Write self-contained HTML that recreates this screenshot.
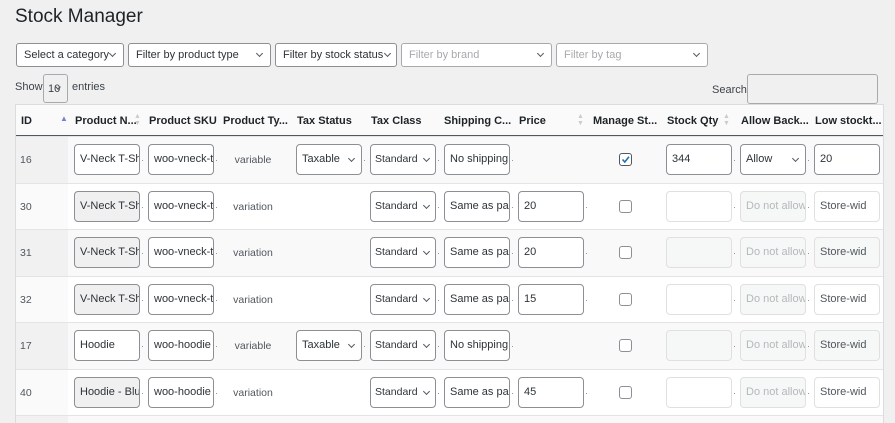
<!DOCTYPE html>
<html><head><meta charset="utf-8"><style>
*{box-sizing:border-box;margin:0;padding:0}
html,body{width:895px;height:423px;overflow:hidden}
body{background:#f0f0f1;font-family:"Liberation Sans",sans-serif;color:#3c434a;font-size:11px;position:relative}
.a{position:absolute}
h1{position:absolute;left:15px;top:6px;font-size:19px;font-weight:400;color:#1d2327}
.f{position:absolute;top:43px;height:24px;background:#fff;border:1px solid #8c8f94;border-radius:3px;padding:0 7px;line-height:22px;font-size:11px;color:#2c3338;white-space:nowrap}
.f.p{color:#a7aaad;border-color:#a7aaad}
.chev{position:absolute;width:5px;height:5px;border-right:1.2px solid #50575e;border-bottom:1.2px solid #50575e;transform:rotate(45deg)}
.tbl{position:absolute;left:15px;top:104px;width:869px;height:319px;background:#fff;border-left:1px solid #dcdcde;border-right:1px solid #dcdcde;border-top:1px solid #dcdcde;overflow:hidden}
.hd{position:absolute;left:0;top:0;width:869px;height:32px;background:#fafafa;border-bottom:2px solid #50575e}
.hd span{position:absolute;top:10px;font-weight:bold;font-size:11px;color:#1d2327}
.r{position:absolute;left:-1px;width:869px;height:47px;border-top:1px solid #e4e4e4}
.r.o{background:#f9f9f9}
.id{position:absolute;left:0;top:0;width:53px;height:46px;padding:17px 5px;color:#50575e;font-size:10.5px;background:#fafafa}
.o .id{background:#f1f1f1}
.i{position:absolute;top:7px;width:66px;height:31px;border:1px solid #8c8f94;border-radius:4px;background:#fff;padding:0 5px;line-height:29px;font-size:11px;color:#2c3338;white-space:nowrap;overflow:hidden}
.i.g{background:#f0f0f1}
.i.d{border-color:#e0e0e0;color:#b5b8bb;background:#fff}
.o .i.d{background:#f6f7f7}
.i.d2{border-color:#e0e0e0;color:#b5b8bb;background:#f6f7f7}
.dot{position:absolute;top:23px;width:1px;height:1px;background:#999}
.t{position:absolute;left:201px;width:74px;top:17px;text-align:center;font-size:10.5px;color:#50575e}
.cb{position:absolute;left:604px;top:16px;width:13px;height:13px;border:1px solid #8c8f94;border-radius:3px;background:#fff}
.sel{padding-right:16px}
.sel .chev{right:7px;top:11px}
.sc{font-size:10.5px;padding-left:4px}
</style></head><body>
<h1>Stock Manager</h1>
<div class="f" style="left:16px;width:108px">Select a category<i class="chev" style="right:8px;top:7px"></i></div>
<div class="f" style="left:128px;width:143px">Filter by product type<i class="chev" style="right:8px;top:7px"></i></div>
<div class="f" style="left:275px;width:122px;padding-right:16px;overflow:hidden">Filter by stock status<i class="chev" style="right:6px;top:7px"></i></div>
<div class="f p" style="left:401px;width:151px">Filter by brand<i class="chev" style="right:8px;top:7px"></i></div>
<div class="f p" style="left:556px;width:152px">Filter by tag<i class="chev" style="right:8px;top:7px"></i></div>
<div class="a" style="left:15px;top:81px;color:#3c434a">Show</div>
<div class="a" style="left:43px;top:74px;width:25px;height:29px;border:1px solid #a7aaad;border-radius:3px;background:#f0f0f1;padding:8px 4px;font-size:11px">10<i class="chev" style="left:12px;top:10px;width:4px;height:4px"></i></div>
<div class="a" style="left:72px;top:81px">entries</div>
<div class="a" style="left:712px;top:84px">Search:</div>
<div class="a" style="left:747px;top:74px;width:131px;height:30px;border:1px solid #a7aaad;border-radius:3px;background:#f0f0f1"></div>

<div class="tbl">
<div class="hd">
<span style="left:5px">ID</span><span style="left:44px;top:9px;color:#7a7fd6;font-size:8px">▲</span>
<span style="left:59px">Product N...</span><span style="left:118px;color:#ccc;font-size:7px;top:8px">▲<br>▼</span>
<span style="left:133px">Product SKU</span>
<span style="left:207px">Product Ty...</span>
<span style="left:281px">Tax Status</span>
<span style="left:355px">Tax Class</span>
<span style="left:428px">Shipping C...</span>
<span style="left:503px">Price</span><span style="left:561px;color:#ccc;font-size:7px;top:8px">▲<br>▼</span>
<span style="left:577px">Manage St...</span>
<span style="left:651px">Stock Qty</span><span style="left:707px;color:#ccc;font-size:7px;top:8px">▲<br>▼</span>
<span style="left:725px">Allow Back...</span>
<span style="left:799px">Low stockt...</span>
</div>

<div class="r o" style="top:31px"><div class="id">16</div>
<div class="i" style="left:59px">V-Neck T-Sh</div><i class="dot" style="left:127px"></i>
<div class="i" style="left:133px">woo-vneck-t</div><i class="dot" style="left:201px"></i>
<div class="t">variable</div>
<div class="i sel" style="left:281px">Taxable<i class="chev"></i></div><i class="dot" style="left:349px"></i>
<div class="i sel sc" style="left:355px">Standard<i class="chev" style="right:6px"></i></div><i class="dot" style="left:423px"></i>
<div class="i" style="left:429px">No shipping</div><i class="dot" style="left:497px"></i>
<div class="cb" style="border-color:#50575e"><svg width="11" height="11" style="position:absolute;left:0;top:0"><path d="M2.5 5.5 L4.8 8 L9 2.8" fill="none" stroke="#2271b1" stroke-width="1.6"/></svg></div>
<div class="i" style="left:651px">344</div><i class="dot" style="left:719px"></i>
<div class="i sel" style="left:725px">Allow<i class="chev"></i></div><i class="dot" style="left:793px"></i>
<div class="i" style="left:799px">20</div>
</div>

<div class="r" style="top:78px"><div class="id">30</div>
<div class="i g" style="left:59px">V-Neck T-Sh</div><i class="dot" style="left:127px"></i>
<div class="i" style="left:133px">woo-vneck-t</div><i class="dot" style="left:201px"></i>
<div class="t">variation</div>
<div class="i sel sc" style="left:355px">Standard<i class="chev" style="right:6px"></i></div><i class="dot" style="left:423px"></i>
<div class="i" style="left:429px">Same as par</div><i class="dot" style="left:497px"></i>
<div class="i" style="left:503px">20</div><i class="dot" style="left:571px"></i>
<div class="cb"></div>
<div class="i d" style="left:651px"></div><i class="dot" style="left:719px"></i>
<div class="i d2" style="left:725px">Do not allow</div><i class="dot" style="left:793px"></i>
<div class="i d" style="left:799px;color:#50575e">Store-wid</div>
</div>

<div class="r o" style="top:124px"><div class="id">31</div>
<div class="i g" style="left:59px">V-Neck T-Sh</div><i class="dot" style="left:127px"></i>
<div class="i" style="left:133px">woo-vneck-t</div><i class="dot" style="left:201px"></i>
<div class="t">variation</div>
<div class="i sel sc" style="left:355px">Standard<i class="chev" style="right:6px"></i></div><i class="dot" style="left:423px"></i>
<div class="i" style="left:429px">Same as par</div><i class="dot" style="left:497px"></i>
<div class="i" style="left:503px">20</div><i class="dot" style="left:571px"></i>
<div class="cb"></div>
<div class="i d" style="left:651px"></div><i class="dot" style="left:719px"></i>
<div class="i d2" style="left:725px">Do not allow</div><i class="dot" style="left:793px"></i>
<div class="i d" style="left:799px;color:#50575e">Store-wid</div>
</div>

<div class="r" style="top:171px"><div class="id">32</div>
<div class="i g" style="left:59px">V-Neck T-Sh</div><i class="dot" style="left:127px"></i>
<div class="i" style="left:133px">woo-vneck-t</div><i class="dot" style="left:201px"></i>
<div class="t">variation</div>
<div class="i sel sc" style="left:355px">Standard<i class="chev" style="right:6px"></i></div><i class="dot" style="left:423px"></i>
<div class="i" style="left:429px">Same as par</div><i class="dot" style="left:497px"></i>
<div class="i" style="left:503px">15</div><i class="dot" style="left:571px"></i>
<div class="cb"></div>
<div class="i d" style="left:651px"></div><i class="dot" style="left:719px"></i>
<div class="i d2" style="left:725px">Do not allow</div><i class="dot" style="left:793px"></i>
<div class="i d" style="left:799px;color:#50575e">Store-wid</div>
</div>

<div class="r o" style="top:217px"><div class="id">17</div>
<div class="i" style="left:59px">Hoodie</div><i class="dot" style="left:127px"></i>
<div class="i" style="left:133px">woo-hoodie</div><i class="dot" style="left:201px"></i>
<div class="t">variable</div>
<div class="i sel" style="left:281px">Taxable<i class="chev"></i></div><i class="dot" style="left:349px"></i>
<div class="i sel sc" style="left:355px">Standard<i class="chev" style="right:6px"></i></div><i class="dot" style="left:423px"></i>
<div class="i" style="left:429px">No shipping</div><i class="dot" style="left:497px"></i>
<div class="cb"></div>
<div class="i d" style="left:651px"></div><i class="dot" style="left:719px"></i>
<div class="i d2" style="left:725px">Do not allow</div><i class="dot" style="left:793px"></i>
<div class="i d" style="left:799px;color:#50575e">Store-wid</div>
</div>

<div class="r" style="top:264px"><div class="id">40</div>
<div class="i g" style="left:59px">Hoodie - Blu</div><i class="dot" style="left:127px"></i>
<div class="i" style="left:133px">woo-hoodie</div><i class="dot" style="left:201px"></i>
<div class="t">variation</div>
<div class="i sel sc" style="left:355px">Standard<i class="chev" style="right:6px"></i></div><i class="dot" style="left:423px"></i>
<div class="i" style="left:429px">Same as par</div><i class="dot" style="left:497px"></i>
<div class="i" style="left:503px">45</div><i class="dot" style="left:571px"></i>
<div class="cb"></div>
<div class="i d" style="left:651px"></div><i class="dot" style="left:719px"></i>
<div class="i d2" style="left:725px">Do not allow</div><i class="dot" style="left:793px"></i>
<div class="i d" style="left:799px;color:#50575e">Store-wid</div>
</div>

<div class="r o" style="top:310px;height:8px"><div class="id" style="height:8px;padding:0"></div></div>
</div>
</body></html>
